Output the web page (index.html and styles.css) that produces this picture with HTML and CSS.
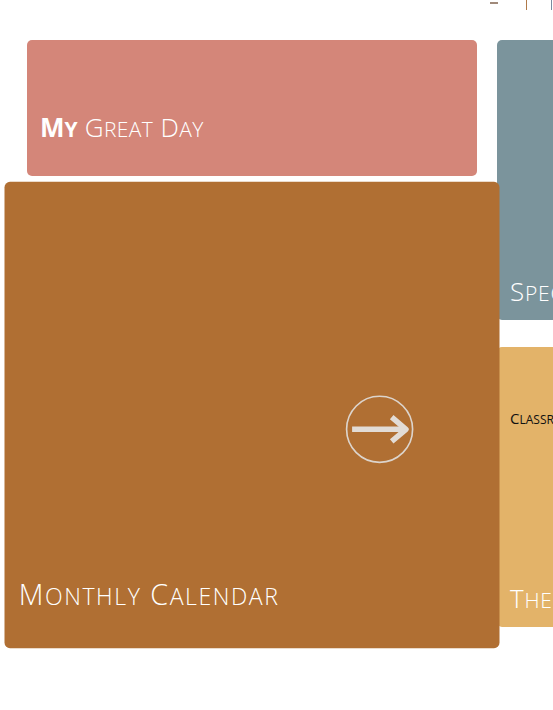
FILE: index.html
```html
<!DOCTYPE html>
<html>
<head>
<meta charset="utf-8">
<link rel="stylesheet" href="styles.css">
</head>
<body>
<div class="topbar">
  <span class="dash"></span>
  <span class="bar bar-a"></span>
  <span class="bar bar-b"></span>
</div>
<div class="board">
  <div class="col">
    <a class="tile tile-pink"><span class="title"><b>M<span class="sc">Y</span></b> G<span class="sc">REAT</span> D<span class="sc">AY</span></span></a>
    <a class="tile tile-brown">
      <span class="title title-wide">M<span class="sc">ONTHLY</span> C<span class="sc">ALENDAR</span></span>
      <svg class="go" width="64" height="64" viewBox="0 0 64 64">
        <circle cx="32" cy="32" r="30" fill="none" stroke="#dcd4cc" stroke-width="1.5"/>
        <path d="M7 32 H55" stroke="#e2dcd6" stroke-width="5" fill="none"/>
        <path d="M43 21 L56 32 L43 43" stroke="#e2dcd6" stroke-width="5" fill="none" stroke-linejoin="round"/>
      </svg>
    </a>
  </div>
  <div class="col">
    <a class="tile tile-gray"><span class="title title-side">S<span class="sc">PECIAL</span></span></a>
    <a class="tile tile-yellow">
      <span class="sub">C<span class="sc">LASSROOM</span></span>
      <span class="title title-side">T<span class="sc">HE</span></span>
    </a>
  </div>
</div>
</body>
</html>
```
FILE: styles.css
```css
html, body {
  margin: 0;
  padding: 0;
  background: #fff;
  overflow: hidden;
}
body {
  width: 553px;
  height: 710px;
  font-family: "Open Sans", "DejaVu Sans", sans-serif;
}
.topbar {
  height: 40px;
  display: flex;
  align-items: flex-start;
  padding-left: 490px;
  box-sizing: border-box;
}
.dash {
  width: 8px;
  height: 2px;
  margin-top: 2px;
  background: #a08a7a;
}
.bar {
  width: 1px;
  height: 10px;
}
.bar-a { margin-left: 28px; background: #b07a4a; }
.bar-b { margin-left: 24px; background: #7a8aa0; }
.board {
  display: flex;
  gap: 20px;
  padding-left: 27px;
}
.col {
  display: flex;
  flex-direction: column;
  gap: 27px;
  width: 450px;
  flex-shrink: 0;
}
.tile {
  display: flex;
  flex-direction: column;
  justify-content: flex-end;
  border-radius: 5px;
  color: #fff;
  padding: 0 13px;
  box-sizing: border-box;
  position: relative;
}
.tile-pink { height: 136px; background: #d48679; padding-bottom: 31px; }
.tile-brown {
  height: 424px;
  background: #b06f33;
  padding-bottom: 31px;
  transform: scale(1.1);
  z-index: 2;
}
.tile-gray { height: 280px; background: #7b949c; padding-bottom: 11px; }
.tile-yellow { height: 280px; background: #e3b369; padding-bottom: 11px; }
.title {
  font-size: 26px;
  line-height: 32px;
  font-weight: 300;
  letter-spacing: 0.4px;
}
.title-wide { letter-spacing: 1.4px; }
.title-side { letter-spacing: 0.8px; }
.title b { font-weight: 700; letter-spacing: 0; }
.sc { font-size: 21px; }
.sub {
  position: absolute;
  left: 13px;
  top: 61px;
  font-size: 15px;
  color: #111;
}
.sub .sc { font-size: 12px; }
.go {
  position: absolute;
  left: 309px;
  top: 193px;
}
```
